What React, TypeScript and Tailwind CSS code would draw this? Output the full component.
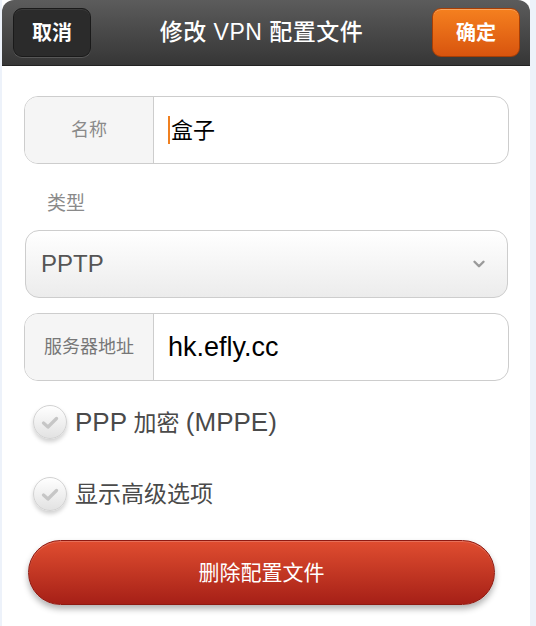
import { ChevronDown } from 'lucide-react';

const font = { fontFamily: '"Liberation Sans", "Noto Sans CJK SC", sans-serif' };

function CheckRow({ children }: { children: React.ReactNode }) {
  return (
    <div className="flex items-center gap-[8px] h-[40px]">
      <div className="w-[34px] h-[34px] rounded-full border border-[#d2d2d2] bg-gradient-to-b from-white to-[#e2e2e2] shadow-[0_3px_4px_rgba(0,0,0,0.18)] flex items-center justify-center">
        <svg width="18" height="13" viewBox="0 0 18 13" fill="none">
          <path d="M2.5 7 L7 11 L15.5 2.5" stroke="#c6c6c6" strokeWidth="3.2" strokeLinecap="round" strokeLinejoin="round" />
        </svg>
      </div>
      <span className="text-[23px] text-[#4a4a4a]">{children}</span>
    </div>
  );
}

export default function App() {
  return (
    <div className="w-[536px] h-[626px] bg-[#edf2fa] pl-[2px] pr-[6px] overflow-hidden" style={font}>
      <div className="h-full bg-white flex flex-col">
        {/* Header bar */}
        <div className="h-[66px] rounded-t-[12px] bg-gradient-to-b from-[#5c5c5c] to-[#363636] border-b border-[#222] flex items-center justify-between pl-[11px] pr-[10px]">
          <button className="w-[78px] h-[49px] rounded-[9px] bg-[#2b2b2b] border border-[#1a1a1a] shadow-[inset_0_1px_0_rgba(255,255,255,0.08),0_1px_0_rgba(255,255,255,0.15)] text-white text-[20px] font-bold">
            取消
          </button>
          <h1 className="text-white text-[23px] font-medium tracking-[0.5px]">修改 VPN 配置文件</h1>
          <button className="w-[88px] h-[49px] rounded-[9px] bg-gradient-to-b from-[#f5801f] to-[#d8540e] border border-[#a73e05] shadow-[inset_0_1px_0_rgba(255,255,255,0.3)] text-white text-[20px] font-bold">
            确定
          </button>
        </div>

        <div className="pl-[22px] pr-[21px] pt-[30px] flex flex-col">
          {/* Name */}
          <div className="h-[68px] rounded-[14px] border border-[#cdcdcd] flex overflow-hidden">
            <div className="w-[129px] bg-[#f5f5f5] border-r border-[#cdcdcd] flex items-center justify-center text-[18px] text-[#8a8a8a]">
              名称
            </div>
            <div className="flex items-center pl-[14px] text-[22px] text-black">
              <span className="w-[2px] h-[28px] bg-[#f08020] mr-[1px]"></span>
              盒子
            </div>
          </div>

          <div className="pl-[23px] pt-[28px] pb-[14px] text-[19px] text-[#8a8a8a] leading-[24px]">类型</div>

          {/* Type select */}
          <div className="mx-[1px] h-[68px] rounded-[14px] border border-[#cdcdcd] bg-gradient-to-b from-white to-[#ececec] flex items-center justify-between pl-[15px] pr-[19px]">
            <span className="text-[24px] text-[#555]">PPTP</span>
            <ChevronDown className="w-[18px] h-[18px] text-[#9a9a9a]" strokeWidth={3.2} />
          </div>

          {/* Server */}
          <div className="mt-[15px] h-[68px] rounded-[14px] border border-[#cdcdcd] flex overflow-hidden">
            <div className="w-[129px] bg-[#f5f5f5] border-r border-[#cdcdcd] flex items-center justify-center text-[18px] text-[#777]">
              服务器地址
            </div>
            <div className="flex items-center pl-[14px] text-[27px] text-black">hk.efly.cc</div>
          </div>

          <div className="pl-[9px] mt-[21px] flex flex-col gap-[32px]">
            <CheckRow>
              <span className="text-[26px]">PPP</span> 加密 <span className="text-[26px]">(MPPE)</span>
            </CheckRow>
            <CheckRow>显示高级选项</CheckRow>
          </div>

          {/* Delete button */}
          <button className="mt-[26px] ml-[4px] w-[467px] h-[65px] rounded-full bg-gradient-to-b from-[#e04d30] to-[#a61f17] border border-[#8e1a12] shadow-[0_4px_6px_rgba(0,0,0,0.3),inset_0_1px_0_rgba(255,255,255,0.2)] text-white text-[21px]">
            删除配置文件
          </button>
        </div>
      </div>
    </div>
  );
}
